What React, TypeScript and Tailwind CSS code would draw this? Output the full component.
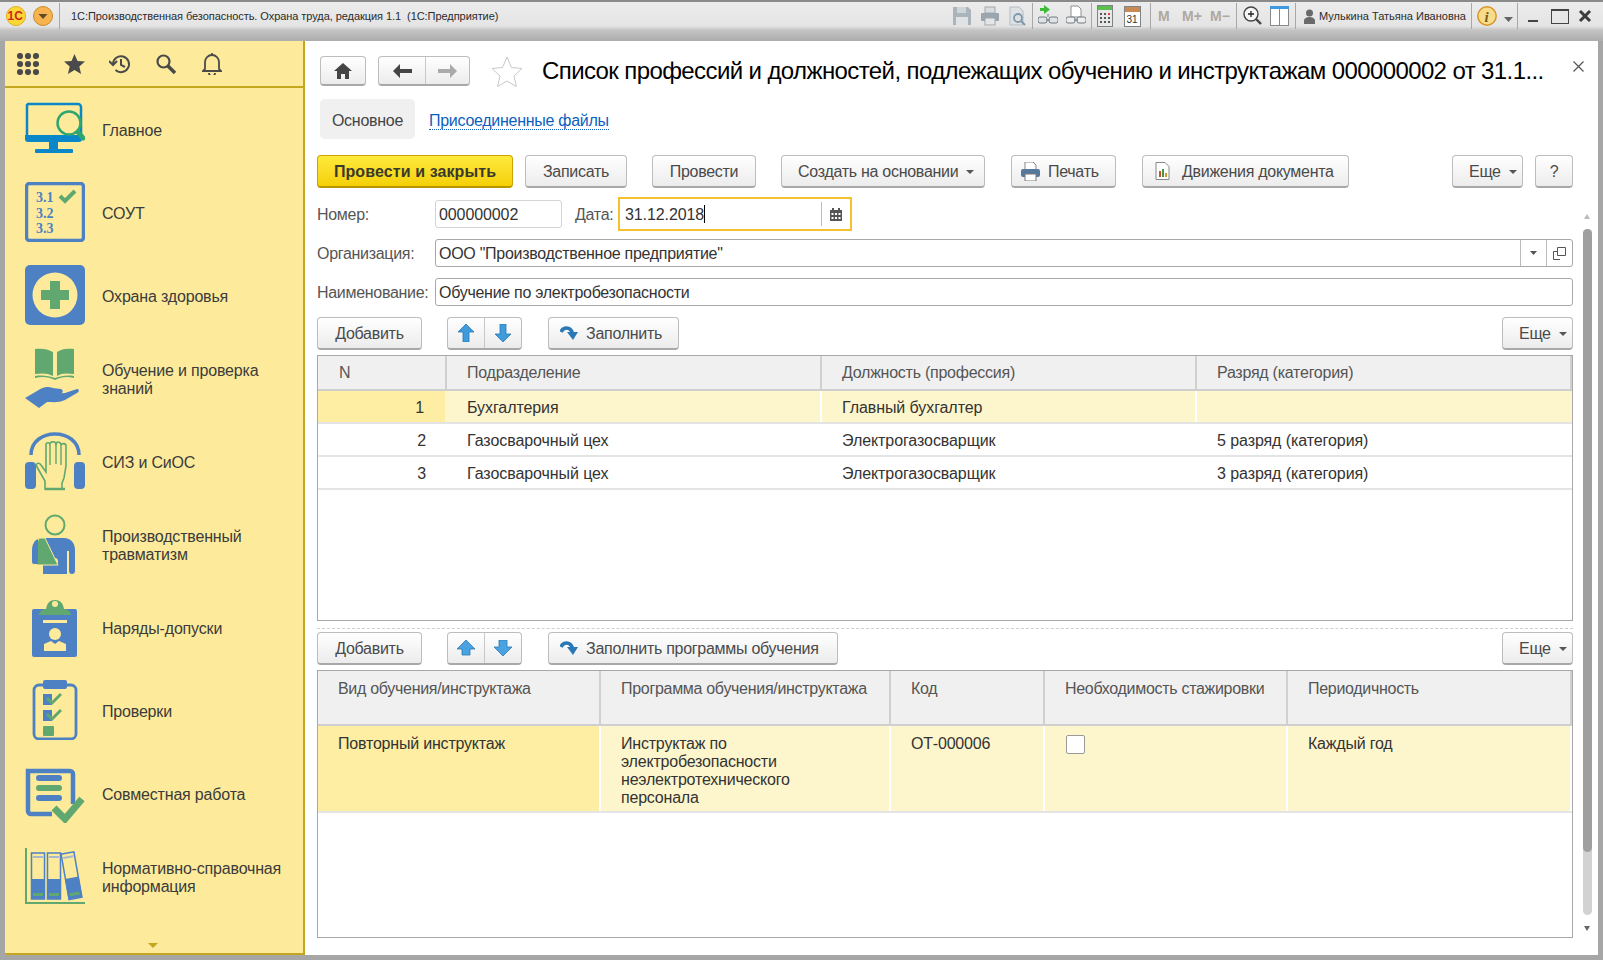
import React from "react";

const FONT = "font-['Liberation_Sans',Arial,sans-serif]";

const Caret = ({ c = "#555" }: { c?: string }) => (
  <svg width="8" height="4" viewBox="0 0 8 4" className="shrink-0"><path d="M0 0h8L4 4z" fill={c} /></svg>
);

function Btn({ w, children, className = "", left = "" }: { w: string; children: React.ReactNode; className?: string; left?: string }) {
  return (
    <div className={`${w} ${className} ${left ? left : "justify-center"} h-[33px] shrink-0 flex items-center gap-2 pt-[2px] rounded-[4px] border border-[#bdbdbd] border-b-2 border-b-[#a8a8a8] bg-gradient-to-b from-white to-[#ececec] text-[16px] tracking-[-0.28px] text-[#4a4a4a] whitespace-nowrap`}>
      {children}
    </div>
  );
}

const FillArrow = () => (
  <svg width="18" height="18" viewBox="0 0 18 18" className="shrink-0 -mt-[2px]">
    <path d="M1 8C3 3 10 2 12.500 9" fill="none" stroke="#2a78b5" strokeWidth="3.600" />
    <path d="M7 8h11l-5 8z" fill="#2a78b5" />
  </svg>
);

const ArrowUp = ({ fat }: { fat?: boolean }) =>
  fat ? (
    <svg width="18" height="16" viewBox="0 0 18 16"><path d="M9 0l9 9h-5v6H5V9H0z" fill="#4aa3e0" stroke="#2a78b5" strokeWidth=".8" /></svg>
  ) : (
    <svg width="16" height="18" viewBox="0 0 16 18"><path d="M8 0l8 8h-5v10H5V8H0z" fill="#3f9bdc" stroke="#2a78b5" strokeWidth=".8" /></svg>
  );
const ArrowDown = ({ fat }: { fat?: boolean }) =>
  fat ? (
    <svg width="18" height="16" viewBox="0 0 18 16"><path d="M5 0h8v7h5l-9 9-9-9h5z" fill="#4aa3e0" stroke="#2a78b5" strokeWidth=".8" /></svg>
  ) : (
    <svg width="16" height="18" viewBox="0 0 16 18"><path d="M5 0h6v10h5l-8 8-8-8h5z" fill="#3f9bdc" stroke="#2a78b5" strokeWidth=".8" /></svg>
  );

function MoveGroup({ fat }: { fat?: boolean }) {
  return (
    <div className="ml-[25px] w-[75px] h-[33px] shrink-0 flex rounded-[4px] border border-[#bdbdbd] border-b-2 border-b-[#a8a8a8] bg-gradient-to-b from-white to-[#ececec]">
      <div className="w-[37px] flex items-center justify-center border-r border-[#c8c8c8]"><ArrowUp fat={fat} /></div>
      <div className="flex-1 flex items-center justify-center"><ArrowDown fat={fat} /></div>
    </div>
  );
}

const BLUE = "#4e81c4";
const GREEN = "#60a870";

const icons: Record<string, React.ReactNode> = {
  main: (
    <>
      <path d="M3 5h50a3 3 0 0 1 3 3v30H2V6z" fill="none" stroke="#0a87c8" strokeWidth="2.500" />
      <path d="M0 36h57v4a3 3 0 0 1-3 3H3a3 3 0 0 1-3-3z" fill="#0a87c8" />
      <rect x="24" y="43" width="9" height="7" fill="#0a87c8" />
      <rect x="10" y="50" width="38" height="4" rx="1" fill="#0a87c8" />
      <circle cx="44" cy="24" r="11.500" fill="#fdeb9b" stroke="#2fa66f" strokeWidth="2.500" />
      <path d="M53 33l5 6" stroke="#2fa66f" strokeWidth="5" strokeLinecap="round" />
    </>
  ),
  sout: (
    <>
      <rect x="1.500" y="1.500" width="57" height="57" rx="3" fill="#fdeb9b" stroke={BLUE} strokeWidth="3.500" />
      <g fill={BLUE} fontFamily="'Liberation Serif',serif" fontWeight="700" fontSize="14">
        <text x="11" y="20">3.1</text>
        <text x="11" y="36">3.2</text>
        <text x="11" y="51">3.3</text>
      </g>
      <path d="M35 14l5 5 10-10" fill="none" stroke={GREEN} strokeWidth="4" />
    </>
  ),
  health: (
    <>
      <rect width="60" height="60" rx="5" fill={BLUE} />
      <circle cx="30" cy="30" r="22.500" fill="#fdeb9b" />
      <path d="M25 16h10v9h9v10h-9v9H25v-9h-9V25h9z" fill={GREEN} />
    </>
  ),
  edu: (
    <>
      <path d="M10 1c7-1 13 0 18 3v24c-5-3-11-3-18-2zM49 1c-7-1-13 0-17 3v24c4-3 10-3 17-2z" fill={GREEN} />
      <path d="M10 30c8-2 14-1 20 2 6-3 12-4 19-2v-2c-7-1-13 0-19 2-6-2-12-3-20-2z" fill={GREEN} />
      <path d="M0 50l12-7c6-4 10-5 16-3l8 1c3 1 2 5-2 5l-8 0 14-1 12-4c3 0 2 3 0 4L40 52c-6 3-12 2-18 2l-8 6z" fill={BLUE} />
    </>
  ),
  siz: (
    <>
      <path d="M6 24C6 -4 54 -4 54 24" fill="none" stroke={BLUE} strokeWidth="3.500" />
      <rect x="0" y="31" width="11" height="27" rx="4" fill={BLUE} />
      <rect x="49" y="31" width="11" height="27" rx="4" fill={BLUE} />
      <path d="M20 58v-8L12 36c-2-4 2-5 4-2l5 7V14c0-3 4-3 4 0-1-3 5-5 6-1 1-3 5-2 5 1 1-2 5-2 5 1v20l-2 12-2 5v6z" fill="#fdeb9b" stroke={GREEN} strokeWidth="1.600" />
      <path d="M25 14v20M31 13v20M36 14v20" stroke={GREEN} strokeWidth="1.400" />
      <path d="M20 58h20" stroke={GREEN} strokeWidth="2.500" />
    </>
  ),
  injury: (
    <>
      <circle cx="30" cy="11" r="9.500" fill="none" stroke={GREEN} strokeWidth="2" />
      <path d="M20 24h19c7 0 11 5 11 12v21a3 3 0 0 1-6 0V37h-2v23H18v-9h12c4 0 4-7 0-7h-3z" fill={BLUE} />
      <path d="M14 24l6 0 13 27H12l-1-20z" fill={GREEN} stroke="#fdeb9b" strokeWidth="1" />
      <path d="M7 36c0-6 3-10 6-11l0 25H9a2 2 0 0 1-2-2z" fill={BLUE} />
    </>
  ),
  permit: (
    <>
      <path d="M10 12h40a2 2 0 0 1 2 2v44a2 2 0 0 1-2 2H9a2 2 0 0 1-2-2V14a2 2 0 0 1 2-2z" fill={BLUE} />
      <path d="M14 18c0-3 3-6 7-6 1-6 4-9 9-9s8 3 9 9c4 0 7 3 7 6z" fill={GREEN} />
      <circle cx="30" cy="7" r="3" fill="#fdeb9b" />
      <rect x="18" y="23" width="24" height="3" fill="#fdeb9b" />
      <circle cx="30" cy="37" r="6" fill="#fdeb9b" />
      <path d="M19 54v-7l7-3 4 3 4-3 7 3v7z" fill="#fdeb9b" />
    </>
  ),
  check: (
    <>
      <rect x="9" y="5" width="42" height="54" rx="5" fill="#fdeb9b" stroke={BLUE} strokeWidth="2.800" />
      <rect x="18" y="0" width="24" height="9" rx="2" fill={BLUE} />
      <path d="M27 14h-9v11h9zM27 30h-9v11h9z" fill={BLUE} />
      <path d="M22 18l5 5 9-9M22 34l5 5 9-9" fill="none" stroke={GREEN} strokeWidth="3" />
      <rect x="18" y="46" width="11" height="10" rx="1" fill={GREEN} />
    </>
  ),
  collab: (
    <>
      <path d="M27 46H6a3 3 0 0 1-3-3V3h42a3 3 0 0 1 3 3v30" transform="translate(0 5)" fill="none" stroke={BLUE} strokeWidth="4.500" />
      <rect x="11" y="12" width="26" height="6" rx="3" fill={BLUE} />
      <rect x="11" y="22" width="26" height="6" rx="3" fill={GREEN} />
      <rect x="11" y="32" width="26" height="6" rx="3" fill={BLUE} />
      <path d="M29 45l11 11 17-20" fill="none" stroke={GREEN} strokeWidth="7" />
    </>
  ),
  ref: (
    <>
      <path d="M1 2v55h59" fill="none" stroke={GREEN} strokeWidth="2" />
      <rect x="6.500" y="7" width="13" height="46" fill="#fdeb9b" stroke={BLUE} strokeWidth="1.500" />
      <rect x="6" y="33" width="14" height="20" fill={BLUE} />
      <rect x="8" y="47" width="10" height="3" fill={GREEN} />
      <rect x="8" y="10" width="10" height="2" fill="#a8b8cc" />
      <rect x="22.500" y="7" width="13" height="46" fill="#fdeb9b" stroke={BLUE} strokeWidth="1.500" />
      <rect x="22" y="33" width="14" height="20" fill={BLUE} />
      <rect x="24" y="47" width="10" height="3" fill={GREEN} />
      <rect x="24" y="10" width="10" height="2" fill="#a8b8cc" />
      <g transform="rotate(-10 45 30)">
        <rect x="40" y="7" width="13" height="46" fill="#fdeb9b" stroke={BLUE} strokeWidth="1.500" />
        <rect x="39.500" y="32" width="14" height="21" fill={BLUE} />
        <rect x="41.500" y="47" width="10" height="3" fill={GREEN} />
        <rect x="41.500" y="10" width="10" height="2" fill="#a8b8cc" />
      </g>
    </>
  ),
};

const menu: [string, string[]][] = [
  ["main", ["Главное"]],
  ["sout", ["СОУТ"]],
  ["health", ["Охрана здоровья"]],
  ["edu", ["Обучение и проверка", "знаний"]],
  ["siz", ["СИЗ и СиОС"]],
  ["injury", ["Производственный", "травматизм"]],
  ["permit", ["Наряды-допуски"]],
  ["check", ["Проверки"]],
  ["collab", ["Совместная работа"]],
  ["ref", ["Нормативно-справочная", "информация"]],
];

const Sep = () => <div className="w-px h-[26px] bg-[#a8a8a8] shrink-0" />;

function TitleBar() {
  return (
    <div className="h-[41px] shrink-0 flex items-start pt-[2px] pl-[6px] pr-[11px] border-t-2 border-[#8a8a8a] bg-[linear-gradient(#ececec_0%,#e4e4e4_62%,#c4c4c4_72%,#adadad_100%)]">
      <div className="h-[24px] flex items-center w-full">
        <svg width="20" height="20" viewBox="0 0 20 20" className="shrink-0">
          <circle cx="10" cy="10" r="9.500" fill="#fdd835" stroke="#e0b020" />
          <text x="1.500" y="14" fontFamily="'Liberation Sans',sans-serif" fontWeight="700" fontSize="12" fill="#d3261d">1С</text>
        </svg>
        <svg width="20" height="20" viewBox="0 0 20 20" className="ml-[7px] shrink-0">
          <circle cx="10" cy="10" r="9.500" fill="#f6b350" stroke="#c98a28" />
          <path d="M5.500 8h9L10 13z" fill="#5c4a28" />
        </svg>
        <div className="ml-[6px] mr-[11px]"><Sep /></div>
        <span className="text-[11px] tracking-[-0.06px] text-[#2b2b2b] whitespace-nowrap">1С:Производственная безопасность. Охрана труда, редакция 1.1&nbsp;&nbsp;(1С:Предприятие)</span>
        <div className="flex-1" />
        <svg width="20" height="20" viewBox="0 0 20 20" className="shrink-0"><path d="M1 1h15l3 3v15H1z" fill="#a9b4bc" /><rect x="5" y="1" width="9" height="6" fill="#cfd6da" /><rect x="4" y="11" width="12" height="8" fill="#dfe3e6" /></svg>
        <svg width="20" height="20" viewBox="0 0 20 20" className="ml-[8px] shrink-0"><rect x="5" y="1" width="10" height="6" fill="#d8dcdf" stroke="#a0a8ae" /><rect x="1" y="7" width="18" height="8" rx="1" fill="#9aa5ad" /><rect x="5" y="12" width="10" height="7" fill="#e3e6e8" stroke="#a0a8ae" /></svg>
        <svg width="18" height="20" viewBox="0 0 18 20" className="ml-[9px] shrink-0"><path d="M1 1h9l4 4v14H1z" fill="#dde1e4" stroke="#b4bcc2" /><circle cx="9" cy="12" r="4" fill="none" stroke="#7f98aa" strokeWidth="1.800" /><path d="M12 15l4 4" stroke="#7f98aa" strokeWidth="2" /></svg>
        <div className="ml-[5px] mr-[5px]"><Sep /></div>
        <svg width="20" height="22" viewBox="0 0 20 22" className="shrink-0"><path d="M6 0v3H2v3h4v3l6-4.500z" fill="#3dbb3a" /><rect x="0" y="12" width="9" height="6" rx="2" fill="#dfe3e6" stroke="#707a80" /><rect x="11" y="12" width="9" height="6" rx="2" fill="#dfe3e6" stroke="#707a80" /><path d="M10 9v3M8 15h4" stroke="#707a80" /></svg>
        <svg width="20" height="22" viewBox="0 0 20 22" className="ml-[8px] shrink-0"><path d="M5 1h7l3 3v8H5z" fill="#fff" stroke="#8a9298" /><rect x="0" y="12" width="9" height="6" rx="2" fill="#eee" stroke="#707a80" /><rect x="11" y="12" width="9" height="6" rx="2" fill="#eee" stroke="#707a80" /><path d="M8 15h4" stroke="#707a80" /></svg>
        <div className="ml-[5px] mr-[5px]"><Sep /></div>
        <svg width="16" height="22" viewBox="0 0 16 22" className="shrink-0"><rect x=".5" y=".5" width="15" height="21" fill="#e8e8e8" stroke="#7d8488" /><rect x="1" y="1" width="14" height="4" fill="#5cc04e" /><path d="M3 8h2v2H3zM7 8h2v2H7zM11 8h2v2h-2zM3 12h2v2H3zM7 12h2v2H7zM11 12h2v2h-2zM3 16h2v2H3zM7 16h2v2H7zM11 16h2v2h-2z" fill="#555" /><rect x="11" y="8" width="2" height="2" fill="#e53935" /></svg>
        <svg width="17" height="22" viewBox="0 0 17 22" className="ml-[11px] shrink-0"><rect x=".5" y="1.500" width="16" height="20" fill="#fff" stroke="#7d8488" /><rect x="1" y="2" width="15" height="5" fill="#c98a55" /><text x="2.500" y="18" fontFamily="'Liberation Sans',sans-serif" fontSize="10" fill="#333">31</text></svg>
        <div className="ml-[9px] mr-[7px]"><Sep /></div>
        <span className="w-[24px] text-[14px] font-bold text-[#b0a8a0]">M</span>
        <span className="w-[28px] text-[14px] font-bold text-[#b0a8a0]">M+</span>
        <span className="w-[26px] text-[14px] font-bold text-[#b0a8a0]">M−</span>
        <Sep />
        <svg width="19" height="20" viewBox="0 0 19 20" className="ml-[6px] shrink-0"><circle cx="8" cy="8" r="7" fill="#f5f5f5" stroke="#444" strokeWidth="1.400" /><path d="M5 8h6M8 5v6" stroke="#222" strokeWidth="1.300" /><path d="M13 13l5 5" stroke="#444" strokeWidth="2.400" /></svg>
        <svg width="19" height="20" viewBox="0 0 19 20" className="ml-[8px] shrink-0"><rect x=".5" y=".5" width="18" height="19" fill="#fff" stroke="#888" /><rect y="0" width="19" height="3" fill="#3e9ae0" /><path d="M9.500 3v16" stroke="#888" /></svg>
        <div className="ml-[6px] mr-[7px]"><Sep /></div>
        <svg width="13" height="15" viewBox="0 0 13 15" className="shrink-0"><circle cx="6.500" cy="4" r="3.500" fill="#6a6a6a" /><path d="M1 15v-3c0-3 3-4 5.500-4s5.500 1 5.500 4v3z" fill="#6a6a6a" /></svg>
        <span className="ml-[3px] w-[152px] text-[11px] text-[#2b2b2b] whitespace-nowrap">Мулькина Татьяна Ивановна</span>
        <Sep />
        <svg width="20" height="20" viewBox="0 0 20 20" className="ml-[5px] shrink-0"><circle cx="10" cy="10" r="9.200" fill="#f7dc8a" stroke="#d9952a" strokeWidth="1.500" /><text x="7.500" y="15.500" fontFamily="'Liberation Serif',serif" fontStyle="italic" fontWeight="700" fontSize="15" fill="#7a5a20">i</text></svg>
        <svg width="9" height="5" viewBox="0 0 9 5" className="ml-[7px] mt-[7px] shrink-0"><path d="M0 0h9L4.500 5z" fill="#666" /></svg>
        <div className="ml-[4px] mr-[10px]"><Sep /></div>
        <div className="w-[10px] h-[2px] mt-[10px] bg-[#444] shrink-0" />
        <div className="ml-[13px] w-[18px] h-[15px] border border-[#444] border-t-[2px] shrink-0" />
        <svg width="14" height="14" viewBox="0 0 14 14" className="ml-[9px] shrink-0"><path d="M2 2l10 10M12 2L2 12" stroke="#3c3c3c" strokeWidth="3" /></svg>
      </div>
    </div>
  );
}

function Sidebar() {
  return (
    <div className="w-[300px] shrink-0 flex flex-col bg-[#fdeb9b] border-r-2 border-b-2 border-[#c4a71f]">
      <div className="h-[47px] shrink-0 flex items-center border-b-2 border-[#c4a71f]">
        <svg width="22" height="22" viewBox="0 0 22 22" className="ml-[12px]" fill="#4a4a4a">
          {[3, 11, 19].flatMap((y) => [3, 11, 19].map((x) => <circle key={`${x}-${y}`} cx={x} cy={y} r="3.100" />))}
        </svg>
        <svg width="21" height="20" viewBox="0 0 21 20" className="ml-[25px]"><path d="M10.500 0l3 7 7.500.6-5.700 4.900 1.800 7.500-6.600-4-6.600 4 1.800-7.500L0 7.600 7.500 7z" fill="#4a4a4a" /></svg>
        <svg width="22" height="22" viewBox="0 0 22 22" className="ml-[24px]" fill="none" stroke="#4a4a4a" strokeWidth="2"><path d="M4 11a8 8 0 1 1 2.500 6" /><path d="M0 8l4 4 4-4" strokeWidth="2" /><path d="M12 6v6l4 2" /></svg>
        <svg width="20" height="20" viewBox="0 0 20 20" className="ml-[25px]" fill="none" stroke="#4a4a4a"><circle cx="7.500" cy="7.500" r="6" strokeWidth="2.200" /><path d="M12 12l7 7" strokeWidth="3.500" /></svg>
        <svg width="20" height="22" viewBox="0 0 20 22" className="ml-[26px]" fill="none" stroke="#4a4a4a" strokeWidth="1.800"><path d="M3 16V9a7 7 0 0 1 14 0v7l2 2H1z" /><path d="M10 0v2M7 20a3 3 0 0 0 6 0" /></svg>
      </div>
      <div className="flex-1 flex flex-col">
        {menu.map(([k, lines]) => (
          <div key={k} className="h-[83px] shrink-0 flex items-center pl-[20px]">
            <svg width="60" height="60" viewBox="0 0 60 60" className="shrink-0 -mt-[1px]">{icons[k]}</svg>
            <div className="ml-[17px] mt-[2px] text-[16px] tracking-[-0.18px] leading-[18px] text-[#3b3b3b] whitespace-nowrap">
              {lines.map((l) => <div key={l}>{l}</div>)}
            </div>
          </div>
        ))}
        <div className="flex-1 flex items-end justify-center pb-[5px] pr-[2px]">
          <svg width="10" height="5" viewBox="0 0 10 5"><path d="M0 0h10L5 5z" fill="#c4a71f" /></svg>
        </div>
      </div>
    </div>
  );
}

const hCell = "flex items-center border-r-2 border-[#d0d0d0] text-[16px] tracking-[-0.25px] text-[#555] whitespace-nowrap";

function Table1() {
  const rows = [
    ["1", "Бухгалтерия", "Главный бухгалтер", ""],
    ["2", "Газосварочный цех", "Электрогазосварщик", "5 разряд (категория)"],
    ["3", "Газосварочный цех", "Электрогазосварщик", "3 разряд (категория)"],
  ];
  return (
    <div className="mt-[5px] h-[266px] border border-[#a8a8a8] shrink-0">
      <div className="flex h-[35px] bg-[#f0f0f0] border-b-2 border-[#cfcfcf]">
        <div className={`${hCell} w-[129px] pl-[21px]`}>N</div>
        <div className={`${hCell} w-[375px] pl-[20px]`}>Подразделение</div>
        <div className={`${hCell} w-[375px] pl-[20px]`}>Должность (профессия)</div>
        <div className={`${hCell} flex-1 pl-[20px] border-r-0`}>Разряд (категория)</div>
      </div>
      {rows.map((r, i) => (
        <div key={i} className={`flex h-[33px] border-b-2 border-[#e4e4e4] text-[16px] tracking-[-0.08px] text-[#333] ${i === 0 ? "bg-[#fdf6cd]" : "bg-white"}`}>
          <div className={`w-[129px] flex items-center justify-end pr-[21px] pt-[2px] ${i === 0 ? "bg-[#fdeea3] border-r-2 border-[#fdf6cd]" : ""}`}>{r[0]}</div>
          <div className={`w-[375px] flex items-center pl-[20px] pt-[2px] ${i === 0 ? "border-r-2 border-white" : ""}`}>{r[1]}</div>
          <div className={`w-[375px] flex items-center pl-[20px] pt-[2px] ${i === 0 ? "border-r-2 border-white" : ""}`}>{r[2]}</div>
          <div className="flex-1 flex items-center pl-[20px] pt-[2px]">{r[3]}</div>
        </div>
      ))}
    </div>
  );
}

function Table2() {
  const head = "flex items-start pt-[9px] border-r-2 border-[#d0d0d0] text-[16px] tracking-[-0.3px] leading-[18px] text-[#555] whitespace-nowrap";
  const cell = "pt-[9px] border-r-2 border-white text-[16px] tracking-[-0.2px] leading-[18px] text-[#333]";
  return (
    <div className="mt-[5px] h-[268px] border border-[#a8a8a8] shrink-0">
      <div className="flex h-[55px] bg-[#f0f0f0] border-b-2 border-[#cfcfcf]">
        <div className={`${head} w-[283px] pl-[20px]`}>Вид обучения/инструктажа</div>
        <div className={`${head} w-[290px] pl-[20px]`}>Программа обучения/инструктажа</div>
        <div className={`${head} w-[154px] pl-[20px]`}>Код</div>
        <div className={`${head} w-[243px] pl-[20px]`}>Необходимость стажировки</div>
        <div className={`${head} flex-1 pl-[20px] border-r-0`}>Периодичность</div>
      </div>
      <div className="flex h-[87px] bg-[#fdf6cd] border-b-2 border-[#e4e4e4]">
        <div className={`${cell} w-[283px] pl-[20px] bg-[#fdeea3] text-[#111]`}>Повторный инструктаж</div>
        <div className={`${cell} w-[290px] pl-[20px]`}>Инструктаж по<br />электробезопасности<br />неэлектротехнического<br />персонала</div>
        <div className={`${cell} w-[154px] pl-[20px]`}>ОТ-000006</div>
        <div className={`${cell} w-[243px] pl-[21px]`}><div className="w-[19px] h-[19px] bg-white border border-[#9a9a9a] rounded-[2px]" /></div>
        <div className={`${cell} flex-1 pl-[20px] border-r-0`}>Каждый год</div>
      </div>
    </div>
  );
}

function Toolbar({ label, w, fat }: { label: string; w: string; fat?: boolean }) {
  return (
    <div className="flex h-[33px] shrink-0">
      <Btn w="w-[105px]">Добавить</Btn>
      <MoveGroup fat={fat} />
      <Btn w={w} className="ml-[26px]" left="justify-start pl-[11px]"><FillArrow />{label}</Btn>
      <div className="flex-1" />
      <Btn w="w-[71px]" left="justify-start pl-[16px]">Еще <Caret /></Btn>
    </div>
  );
}

function Main() {
  return (
    <div className="flex-1 min-w-0 bg-white flex flex-col">
      <div className="flex items-center h-[30px] mt-[15px] pl-[15px] pr-[14px] shrink-0">
        <div className="w-[46px] h-[30px] flex items-center justify-center rounded-[4px] border border-[#bdbdbd] border-b-2 border-b-[#a8a8a8] bg-gradient-to-b from-white to-[#ececec] shrink-0">
          <svg width="18" height="16" viewBox="0 0 18 16"><path d="M9 0l9 8h-3v8h-4v-5H7v5H3V8H0z" fill="#444" /></svg>
        </div>
        <div className="ml-[12px] w-[92px] h-[30px] flex rounded-[4px] border border-[#bdbdbd] border-b-2 border-b-[#a8a8a8] bg-gradient-to-b from-white to-[#ececec] shrink-0">
          <div className="w-[47px] flex items-center justify-center border-r border-[#c8c8c8]">
            <svg width="19" height="14" viewBox="0 0 19 14"><path d="M7 0v5h12v4H7v5L0 7z" fill="#444" /></svg>
          </div>
          <div className="flex-1 flex items-center justify-center">
            <svg width="19" height="14" viewBox="0 0 19 14"><path d="M12 0v5H0v4h12v5l7-7z" fill="#aaa" /></svg>
          </div>
        </div>
        <svg width="32" height="31" viewBox="0 0 32 31" className="ml-[21px] shrink-0"><path d="M16 1l4.500 10.500L31 12.500l-8 7.500 2.400 10.500L16 25l-9.400 5.500L9 20 1 12.500l10.500-1z" fill="#fff" stroke="#c8c8c8" /></svg>
        <div className="ml-[19px] flex-1 min-w-0 text-[24px] tracking-[-0.6px] text-black whitespace-nowrap">Список профессий и должностей, подлежащих обучению и инструктажам 000000002 от 31.1...</div>
        <svg width="11" height="11" viewBox="0 0 11 11" className="shrink-0 -mt-[9px]"><path d="M.5.500l10 10M10.500.500l-10 10" stroke="#555" strokeWidth="1.200" /></svg>
      </div>

      <div className="flex items-center h-[40px] mt-[13px] pl-[15px] shrink-0">
        <div className="w-[95px] h-[40px] pt-[3px] rounded-[5px] bg-[#f0f0f0] flex items-center justify-center text-[16px] tracking-[-0.28px] text-[#444]">Основное</div>
        <span className="ml-[14px] mt-[3px] text-[16px] tracking-[-0.28px] text-[#0b5fc0] border-b border-dotted border-[#0b5fc0] leading-[17px]">Присоединенные файлы</span>
      </div>

      <div className="flex-1 min-h-0 flex">
        <div className="w-[1256px] ml-[12px] shrink-0 flex flex-col">
          <div className="flex h-[33px] mt-[16px] shrink-0">
            <div className="w-[196px] h-[33px] pt-[2px] flex items-center justify-center rounded-[4px] border border-[#c9a400] border-b-2 border-b-[#b89600] bg-gradient-to-b from-[#ffea3a] to-[#f5d000] text-[16px] tracking-[0.1px] font-bold text-[#3a3a2a] shrink-0">Провести и закрыть</div>
            <Btn w="w-[102px]" className="ml-[12px]">Записать</Btn>
            <Btn w="w-[104px]" className="ml-[25px]">Провести</Btn>
            <Btn w="w-[204px]" className="ml-[25px]" left="justify-start pl-[16px]">Создать на основании <Caret /></Btn>
            <Btn w="w-[105px]" className="ml-[26px]" left="justify-start pl-[9px]">
              <svg width="19" height="19" viewBox="0 0 19 19" className="-mt-[2px]"><path d="M4 0h8l3 3v5H4z" fill="#fff" stroke="#888" /><rect y="7" width="19" height="8" rx="2" fill="#55799c" /><rect x="4" y="12" width="11" height="7" fill="#fff" stroke="#777" /></svg>
              Печать
            </Btn>
            <Btn w="w-[207px]" className="ml-[26px]" left="justify-start pl-[12px] gap-[12px]">
              <svg width="15" height="18" viewBox="0 0 15 18" className="-mt-[2px]"><path d="M1 .500h9l4 4v13H1z" fill="#fff" stroke="#888" /><rect x="4" y="9" width="2" height="6" fill="#d04a2a" /><rect x="7" y="7" width="2" height="8" fill="#3d9b40" /><rect x="10" y="11" width="2" height="4" fill="#d09a2a" /></svg>
              Движения документа
            </Btn>
            <div className="flex-1" />
            <Btn w="w-[71px]" left="justify-start pl-[16px]">Еще <Caret /></Btn>
            <Btn w="w-[38px]" className="ml-[12px]">?</Btn>
          </div>

          <div className="flex items-center h-[28px] mt-[12px] shrink-0 text-[16px] tracking-[-0.3px]">
            <div className="w-[118px] pt-[2px] text-[#555]">Номер:</div>
            <div className="w-[127px] h-[28px] pt-[2px] rounded-[3px] border border-[#d4d4d4] flex items-center pl-[3px] tracking-[-0.1px] text-[#333]">000000002</div>
            <div className="ml-[13px] w-[43px] pt-[2px] text-[#555]">Дата:</div>
            <div className="w-[234px] h-[34px] border-2 border-[#f5c12e] flex items-center pl-[5px] tracking-[-0.1px] text-[#333]">
              <span className="mt-[2px]">31.12.2018</span><span className="w-px h-[18px] bg-black" />
              <div className="flex-1" />
              <div className="w-px h-[24px] bg-[#bbb]" />
              <svg width="12" height="13" viewBox="0 0 12 13" className="mx-[8px]"><rect y="2" width="12" height="11" fill="#555" /><rect x="2" y="0" width="2" height="3" fill="#555" /><rect x="8" y="0" width="2" height="3" fill="#555" /><path d="M1.500 5h2v2h-2zM5 5h2v2H5zM8.500 5h2v2h-2zM1.500 9h2v2h-2zM5 9h2v2H5zM8.500 9h2v2h-2z" fill="#fff" /></svg>
            </div>
          </div>

          <div className="flex items-center h-[28px] mt-[11px] shrink-0 text-[16px] tracking-[-0.3px]">
            <div className="w-[118px] pt-[2px] text-[#555]">Организация:</div>
            <div className="flex-1 h-[28px] rounded-[3px] border border-[#a8a8a8] flex items-center pl-[3px] tracking-[-0.28px] text-[#333]">
              <span className="flex-1 mt-[2px]">ООО "Производственное предприятие"</span>
              <div className="w-[26px] h-full border-l border-[#bbb] flex items-center justify-center"><svg width="7" height="4" viewBox="0 0 7 4"><path d="M0 0h7L3.500 4z" fill="#555" /></svg></div>
              <div className="w-[26px] h-full border-l border-[#bbb] flex items-center justify-center"><svg width="13" height="13" viewBox="0 0 13 13" fill="none" stroke="#555"><path d="M4.500.500h8v8h-8zM4 4.500H.500v8H7" /></svg></div>
            </div>
          </div>

          <div className="flex items-center h-[28px] mt-[11px] shrink-0 text-[16px] tracking-[-0.3px]">
            <div className="w-[118px] pt-[2px] text-[#555]">Наименование:</div>
            <div className="flex-1 h-[28px] pt-[2px] rounded-[3px] border border-[#a8a8a8] flex items-center pl-[3px] tracking-[-0.28px] text-[#333]">Обучение по электробезопасности</div>
          </div>

          <div className="mt-[11px] shrink-0"><Toolbar label="Заполнить" w="w-[131px]" /></div>
          <Table1 />
          <div className="mt-[7px] border-t border-dashed border-[#cfcfcf] h-[4px] shrink-0" />
          <Toolbar label="Заполнить программы обучения" w="w-[290px]" fat />
          <Table2 />
        </div>
        <div className="flex-1 flex flex-col items-center pt-[75px] pb-[7px] pl-[3px]">
          <svg width="6" height="5" viewBox="0 0 6 5"><path d="M0 5h6L3 0z" fill="#bbb" /></svg>
          <div className="mt-[10px] w-[9px] flex-1 rounded-full bg-[#d2d2d2] flex flex-col">
            <div className="h-[623px] rounded-full bg-[#9f9f9f]" />
          </div>
          <svg width="6" height="5" viewBox="0 0 6 5" className="mt-[11px]"><path d="M0 0h6L3 5z" fill="#666" /></svg>
        </div>
      </div>
      <div className="h-[17px] shrink-0" />
    </div>
  );
}

export default function App() {
  return (
    <div className={`${FONT} w-[1603px] h-[960px] overflow-hidden bg-[#a6a6a6] flex flex-col`}>
      <TitleBar />
      <div className="flex h-[914px] mx-[5px] shrink-0">
        <Sidebar />
        <Main />
      </div>
    </div>
  );
}
